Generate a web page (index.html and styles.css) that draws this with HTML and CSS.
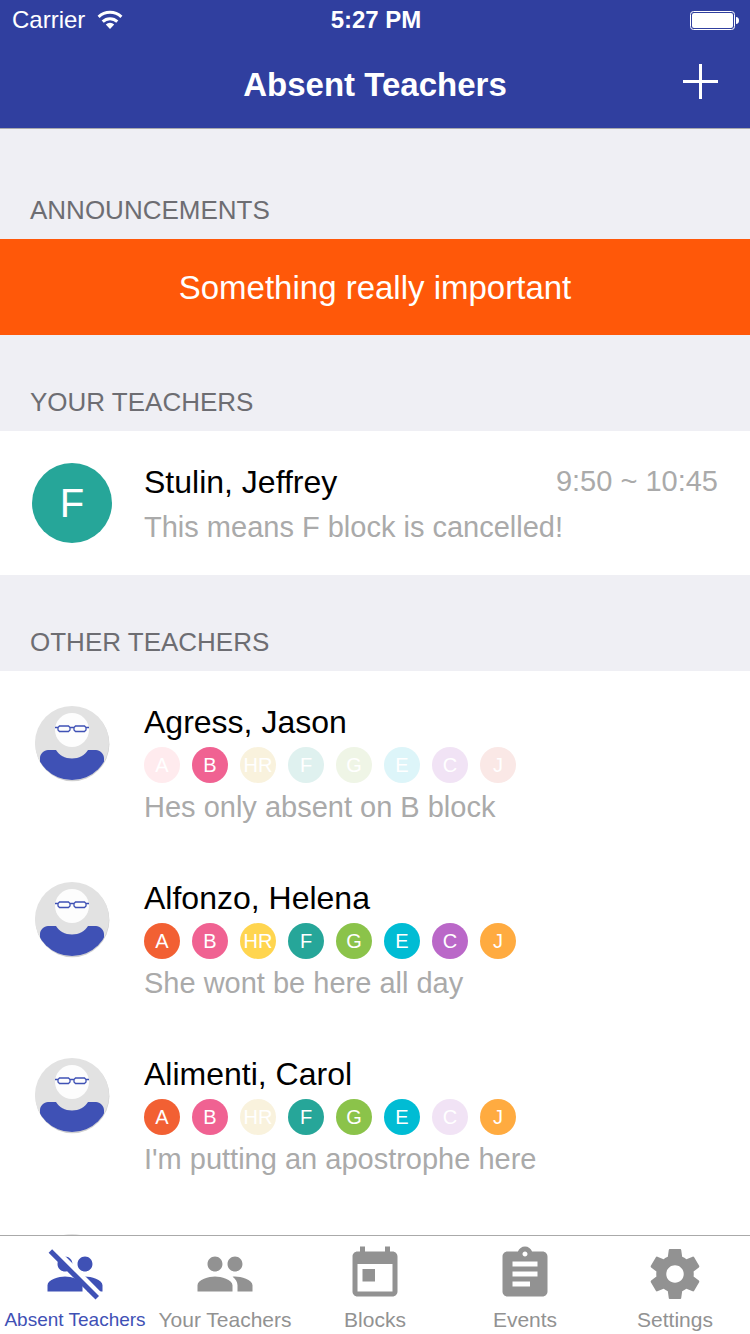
FILE: index.html
```html
<!DOCTYPE html>
<html lang="en">
<head>
<meta charset="utf-8">
<meta name="viewport" content="width=device-width, initial-scale=1">
<title>Absent Teachers</title>
<link rel="stylesheet" href="styles.css">
</head>
<body>
<svg class="sprites" aria-hidden="true">
  <symbol id="avatar" viewBox="0 0 80 80">
    <defs><clipPath id="disc"><circle cx="40" cy="40" r="37"/></clipPath></defs>
    <circle cx="40.4" cy="41.2" r="37" fill="#d0d0d0"/>
    <circle cx="40" cy="40" r="37" fill="#e2e2e2"/>
    <circle cx="40" cy="27" r="17" fill="#fdfdfd"/>
    <g clip-path="url(#disc)">
      <path d="M16 47h8c3 5 9 8.500 16 8.500S53 52 56 47h8c4 0 8 4 8 8v25H8V55c0-4 4-8 8-8z" fill="#3f51b5"/>
    </g>
    <path d="M23 24.500h3l1.500-1.500h9l1.500 1.500h4l1.500-1.500h9l1.500 1.500h3M26 24.500v2.500l1.500 1.500h9l1.500-1.500v-2.500M54 24.500v2.500l-1.500 1.500h-9L42 27v-2.500" fill="none" stroke="#3f51b5" stroke-width="1.300"/>
  </symbol>
  <symbol id="people" viewBox="0 0 24 24">
    <path d="M16 11c1.660 0 2.990-1.340 2.990-3S17.660 5 16 5s-3 1.340-3 3 1.340 3 3 3zm-8 0c1.660 0 2.990-1.340 2.990-3S9.660 5 8 5 5 6.340 5 8s1.340 3 3 3zm0 2c-2.330 0-7 1.170-7 3.500V19h14v-2.500c0-2.330-4.670-3.500-7-3.500zm8 0c-.29 0-.62.02-.97.05 1.160.84 1.970 1.970 1.970 3.450V19h6v-2.500c0-2.330-4.670-3.500-7-3.500z"/>
  </symbol>
</svg>

<header class="header">
  <div class="status">
    <span class="carrier">Carrier
      <svg width="26" height="20" viewBox="0 0 26 20" aria-hidden="true">
        <g fill="none" stroke="#fff" stroke-width="3">
          <path d="M1.600 6.800a16.500 16.500 0 0 1 22.800 0"/>
          <path d="M5.700 11.600a10.500 10.500 0 0 1 14.600 0"/>
        </g>
        <path d="M8.800 14.500a6 6 0 0 1 8.400 0L13 18.900z" fill="#fff"/>
      </svg>
    </span>
    <span class="clock">5:27 PM</span>
    <svg class="battery" width="50" height="20" viewBox="0 0 50 20" aria-label="Battery full">
      <rect x=".5" y="1.500" width="44" height="18" rx="3" fill="none" stroke="#fff"/>
      <rect x="2" y="3" width="41" height="15" rx="2" fill="#fff"/>
      <path d="M46 7c2 0 3 1.500 3 3.500S48 14 46 14z" fill="#fff"/>
    </svg>
  </div>
  <div class="titlebar">
    <h1 class="title">Absent Teachers</h1>
    <button class="add" type="button" aria-label="Add">
      <svg width="36" height="36" viewBox="0 0 36 36" aria-hidden="true"><path d="M0 17.500h35M17.500 0v35" stroke="#fff" stroke-width="3"/></svg>
    </button>
  </div>
</header>

<main class="content">
  <h2 class="section section-first">ANNOUNCEMENTS</h2>
  <p class="announcement">Something really important</p>

  <h2 class="section">YOUR TEACHERS</h2>
  <article class="row">
    <span class="block-avatar teal">F</span>
    <div class="details own">
      <div class="heading"><h3 class="name">Stulin, Jeffrey</h3><span class="time">9:50 ~ 10:45</span></div>
      <p class="note">This means F block is cancelled!</p>
    </div>
  </article>

  <h2 class="section">OTHER TEACHERS</h2>
  <article class="row">
    <svg class="avatar" aria-hidden="true"><use href="#avatar"/></svg>
    <div class="details">
      <h3 class="name">Agress, Jason</h3>
      <div class="blocks">
        <span class="block red off">A</span><span class="block pink">B</span><span class="block yellow off">HR</span><span class="block teal off">F</span><span class="block green off">G</span><span class="block cyan off">E</span><span class="block purple off">C</span><span class="block orange off">J</span>
      </div>
      <p class="note">Hes only absent on B block</p>
    </div>
  </article>
  <article class="row">
    <svg class="avatar" aria-hidden="true"><use href="#avatar"/></svg>
    <div class="details">
      <h3 class="name">Alfonzo, Helena</h3>
      <div class="blocks">
        <span class="block red">A</span><span class="block pink">B</span><span class="block yellow">HR</span><span class="block teal">F</span><span class="block green">G</span><span class="block cyan">E</span><span class="block purple">C</span><span class="block orange">J</span>
      </div>
      <p class="note">She wont be here all day</p>
    </div>
  </article>
  <article class="row">
    <svg class="avatar" aria-hidden="true"><use href="#avatar"/></svg>
    <div class="details">
      <h3 class="name">Alimenti, Carol</h3>
      <div class="blocks">
        <span class="block red">A</span><span class="block pink">B</span><span class="block yellow off">HR</span><span class="block teal">F</span><span class="block green">G</span><span class="block cyan">E</span><span class="block purple off">C</span><span class="block orange">J</span>
      </div>
      <p class="note">I'm putting an apostrophe here</p>
    </div>
  </article>
  <article class="row">
    <svg class="avatar" aria-hidden="true"><use href="#avatar"/></svg>
  </article>
</main>

<nav class="tabs">
  <a class="tab active" href="#absent" aria-current="page">
    <svg class="icon" viewBox="0 0 24 24" aria-hidden="true">
      <mask id="gap"><rect width="24" height="24" fill="#fff"/><path d="M3.400 1.600 22.100 20.400" stroke="#000" stroke-width="2.100"/></mask>
      <g mask="url(#gap)"><use href="#people"/></g>
      <path d="M2.150 2.800 20.900 21.500" stroke="currentColor" stroke-width="2"/>
    </svg>
    <span>Absent Teachers</span>
  </a>
  <a class="tab" href="#yours">
    <svg class="icon" viewBox="0 0 24 24" aria-hidden="true"><use href="#people"/></svg>
    <span>Your Teachers</span>
  </a>
  <a class="tab" href="#blocks">
    <svg class="icon" viewBox="0 0 24 24" aria-hidden="true"><path d="M19 3h-1V1h-2v2H8V1H6v2H5c-1.110 0-1.990.9-1.990 2L3 19c0 1.100.89 2 2 2h14c1.100 0 2-.9 2-2V5c0-1.100-.9-2-2-2zm0 16H5V8h14v11zM7 10h5v5H7z"/></svg>
    <span>Blocks</span>
  </a>
  <a class="tab" href="#events">
    <svg class="icon" viewBox="0 0 24 24" aria-hidden="true"><path d="M19 3h-4.180C14.400 1.840 13.300 1 12 1s-2.400.84-2.820 2H5c-1.100 0-2 .9-2 2v14c0 1.100.9 2 2 2h14c1.100 0 2-.9 2-2V5c0-1.100-.9-2-2-2zm-7 0c.55 0 1 .45 1 1s-.45 1-1 1-1-.45-1-1 .45-1 1-1zm2 14H7v-2h7v2zm3-4H7v-2h10v2zm0-4H7V7h10v2z"/></svg>
    <span>Events</span>
  </a>
  <a class="tab" href="#settings">
    <svg class="icon" viewBox="0 0 24 24" aria-hidden="true"><path d="M19.430 12.980c.04-.32.07-.64.07-.98s-.03-.66-.07-.98l2.110-1.650c.19-.15.24-.42.12-.64l-2-3.460c-.12-.22-.39-.3-.61-.22l-2.490 1c-.52-.4-1.080-.73-1.690-.98l-.38-2.650C14.460 2.180 14.250 2 14 2h-4c-.25 0-.46.18-.49.42l-.38 2.650c-.61.25-1.170.59-1.690.98l-2.490-1c-.23-.09-.49 0-.61.22l-2 3.460c-.13.22-.07.49.12.64l2.110 1.650c-.04.32-.07.65-.07.98s.03.66.07.98l-2.110 1.650c-.19.15-.24.42-.12.64l2 3.460c.12.22.39.3.61.22l2.490-1c.52.4 1.080.73 1.690.98l.38 2.650c.03.24.24.42.49.42h4c.25 0 .46-.18.49-.42l.38-2.650c.61-.25 1.170-.59 1.690-.98l2.490 1c.23.09.49 0 .61-.22l2-3.460c.12-.22.07-.49-.12-.64l-2.110-1.650zM12 15.500c-1.930 0-3.500-1.570-3.500-3.500s1.570-3.500 3.500-3.500 3.500 1.570 3.500 3.500-1.570 3.500-3.500 3.500z"/></svg>
    <span>Settings</span>
  </a>
</nav>
</body>
</html>
```
FILE: styles.css
```css
* {
  box-sizing: border-box;
  margin: 0;
  padding: 0;
}

body {
  display: flex;
  flex-direction: column;
  height: 100vh;
  background: #efeff4;
  color: #000;
  font-family: "Liberation Sans", Arial, sans-serif;
}

svg {
  display: block;
  flex: none;
}

.sprites {
  position: absolute;
  width: 0;
  height: 0;
}

.header {
  flex: none;
  background: #303f9f;
  border-bottom: 1px solid #a9a9ad;
  color: #fff;
}

.status {
  display: grid;
  grid-template-columns: 1fr auto 1fr;
  align-items: center;
  height: 40px;
  padding: 0 10px 0 12px;
  font-size: 24px;
}

.carrier {
  display: flex;
  align-items: center;
  gap: 12px;
}

.clock {
  font-weight: bold;
}

.battery {
  justify-self: end;
}

.titlebar {
  display: grid;
  grid-template-columns: 1fr auto 1fr;
  align-items: center;
  height: 88px;
  padding: 0 31px;
}

.title {
  grid-column: 2;
  padding-top: 2px;
  font-size: 33px;
  font-weight: bold;
}

.add {
  justify-self: end;
  padding-bottom: 4px;
  border: 0;
  background: none;
}

.content {
  flex: 1;
  min-height: 0;
  overflow: hidden;
}

.section {
  padding: 48px 30px 10px;
  color: #6d6d72;
  font-size: 26px;
  font-weight: normal;
  line-height: 38px;
}

.section-first {
  padding-top: 62px;
}

.announcement {
  padding: 29px 32px 27px;
  background: #ff5809;
  color: #fff;
  font-size: 33px;
  line-height: 40px;
  text-align: center;
}

.row {
  display: flex;
  align-items: flex-start;
  gap: 32px;
  padding: 32px 32px 22px;
  background: #fff;
}

.avatar {
  width: 80px;
  height: 80px;
}

.block-avatar {
  display: flex;
  flex: none;
  align-items: center;
  justify-content: center;
  width: 80px;
  height: 80px;
  border-radius: 50%;
  color: #fff;
  font-size: 40px;
}

.details {
  display: flex;
  flex: 1;
  flex-direction: column;
  gap: 6px;
}

.own {
  gap: 8px;
  padding-bottom: 8px;
}

.heading {
  display: flex;
  justify-content: space-between;
}

.name {
  font-size: 32px;
  font-weight: normal;
  line-height: 38px;
}

.time,
.note {
  color: #aaa;
  font-size: 29px;
  line-height: 36px;
}

.blocks {
  display: flex;
  gap: 12px;
}

.block {
  width: 36px;
  height: 36px;
  border-radius: 50%;
  color: #fff;
  font-size: 20px;
  line-height: 36px;
  text-align: center;
}

.red { background: #f26033; }
.pink { background: #f06292; }
.yellow { background: #ffd54f; }
.teal { background: #26a699; }
.green { background: #8bc34a; }
.cyan { background: #00bcd4; }
.purple { background: #ba68c8; }
.orange { background: #ffab40; }

.red.off { background: #ffebee; }
.yellow.off { background: #f9f2dd; }
.teal.off { background: #dff1ef; }
.green.off { background: #eff5e6; }
.cyan.off { background: #ddf5f9; }
.purple.off { background: #f1e3f5; }
.orange.off { background: #fae8e6; }

.tabs {
  display: grid;
  flex: none;
  grid-template-columns: repeat(5, 1fr);
  padding-top: 8px;
  border-top: 1px solid #aaa;
  background: #fff;
}

.tab {
  display: flex;
  flex-direction: column;
  align-items: center;
  gap: 2px;
  color: #929292;
  font-size: 21px;
  line-height: 28px;
  text-decoration: none;
  white-space: nowrap;
}

.active {
  color: #3f51b5;
  font-size: 19px;
}

.icon {
  width: 60px;
  height: 60px;
  fill: currentColor;
}
```
